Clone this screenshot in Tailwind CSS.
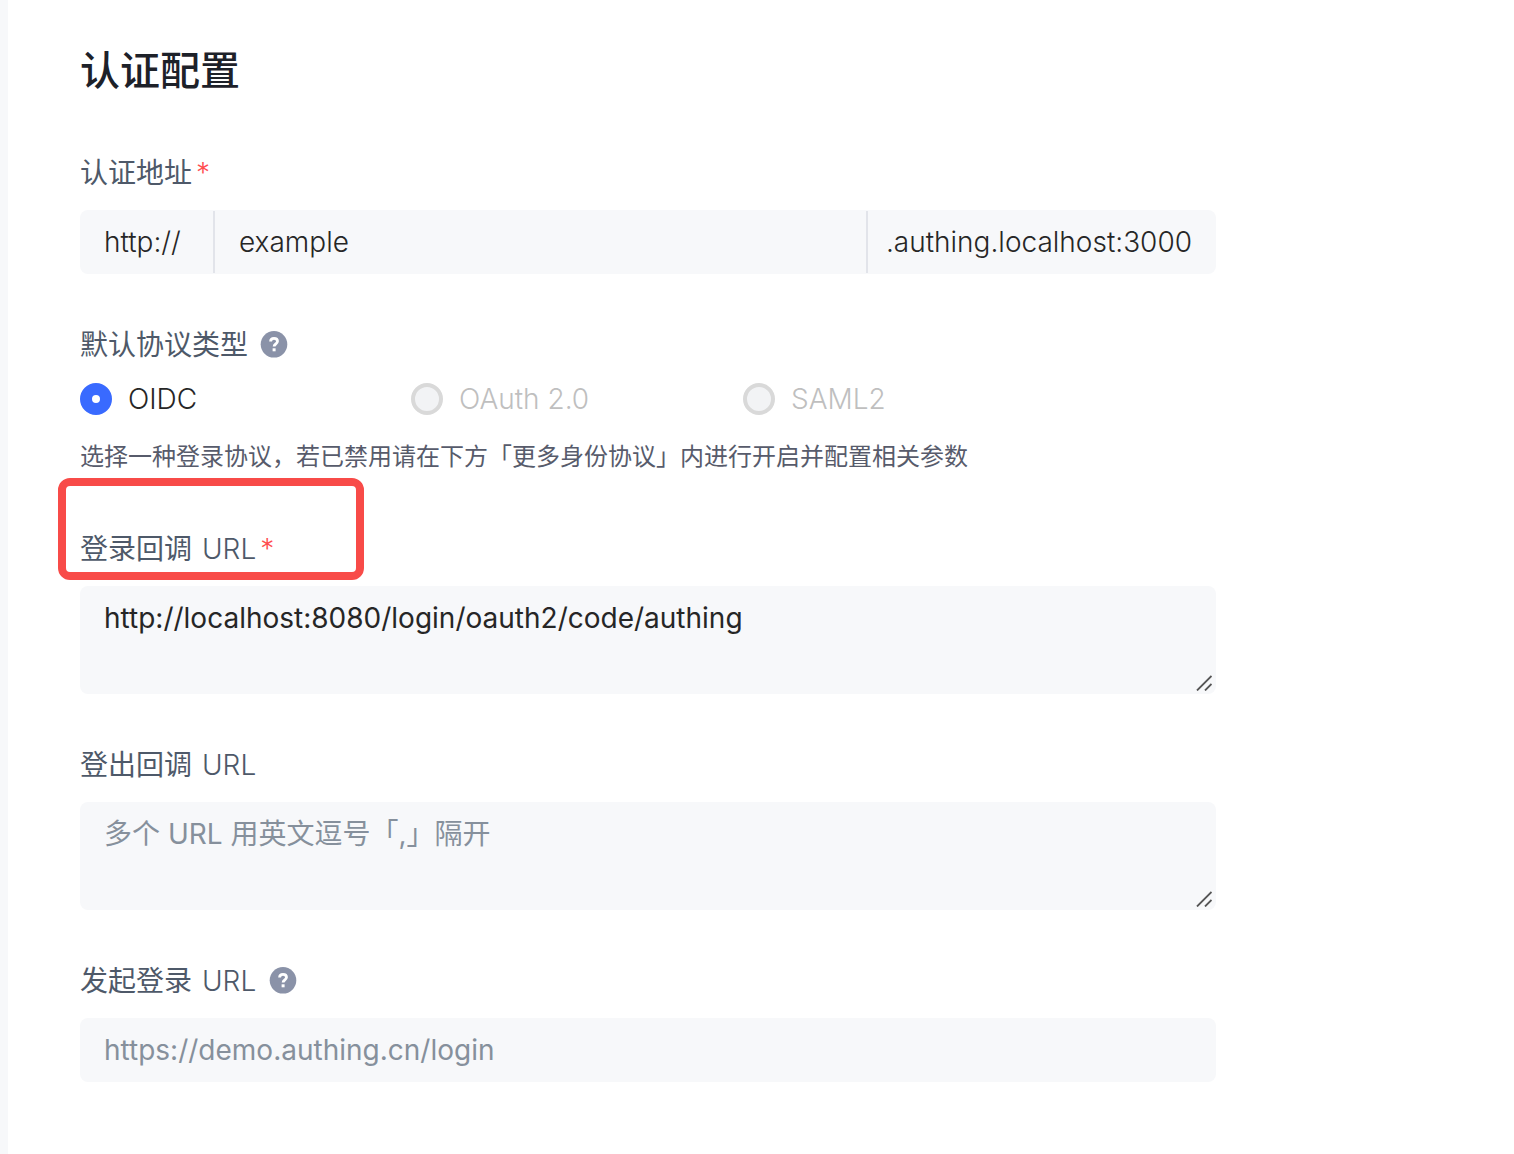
<!DOCTYPE html>
<html lang="zh-CN">
<head>
<meta charset="utf-8">
<meta name="viewport" content="width=device-width, initial-scale=1">
<title>认证配置</title>
<script src="https://cdn.jsdelivr.net/npm/@tailwindcss/browser@4"></script>
</head>
<body class="min-h-screen bg-[#f7f8fa] pl-2">
<main class="min-h-screen bg-white px-[72px] py-10">
<form class="max-w-[1136px] font-[Inter,'Noto_Sans_CJK_SC',sans-serif] text-[28px] text-[#4e5969]">
  <h1 class="text-[40px] leading-[62px] font-medium text-[#1d2129]">认证配置</h1>

  <div class="mt-12">
    <label for="domain" class="mb-3.5 flex h-[46px] items-center">认证地址<span class="ml-1 font-light text-[#ff4d4f]">*</span></label>
    <div class="flex h-16 items-stretch rounded-lg bg-[#f7f8fa] font-light text-[#262626]">
      <span class="my-px flex w-[135px] items-center border-r-2 border-[#e2e4ea] pl-6">http://</span>
      <input id="domain" type="text" value="example" class="min-w-0 flex-1 px-6 outline-none">
      <span class="my-px flex w-[350px] items-center justify-end border-l-2 border-[#e2e4ea] pr-6">.authing.localhost:3000</span>
    </div>
  </div>

  <fieldset class="mt-12">
    <legend class="mb-3.5 flex h-[46px] items-center">默认协议类型
      <svg class="ml-3 size-7" viewBox="0 0 28 28" role="img" aria-label="帮助"><circle cx="14" cy="13.3" r="13.3" fill="#8a92a8"/><path d="M10.600 10.500C10.600 8.500 12 7.300 14 7.300s3.500 1.200 3.500 3c0 2.500-3.400 2.700-3.400 5.300" fill="none" stroke="#fff" stroke-width="2.800"/><rect x="12.600" y="17.300" width="3" height="3" fill="#fff"/></svg>
    </legend>
    <div class="grid h-[34px] grid-cols-[331px_332px_auto] items-center leading-8 font-light">
      <label class="flex items-center gap-4 text-[#262626]"><input type="radio" name="protocol" checked class="size-8 appearance-none rounded-full border-12 border-[#396aff] bg-white">OIDC</label>
      <label class="flex items-center gap-4 text-[#bfbfbf]"><input type="radio" name="protocol" disabled class="size-8 appearance-none rounded-full border-4 border-[#d9d9d9] bg-[#f2f3f5]">OAuth 2.0</label>
      <label class="flex items-center gap-4 text-[#bfbfbf]"><input type="radio" name="protocol" disabled class="size-8 appearance-none rounded-full border-4 border-[#d9d9d9] bg-[#f2f3f5]">SAML2</label>
    </div>
    <p class="mt-5 text-2xl leading-[42px] text-[#575b6b]">选择一种登录协议，若已禁用请在下方「更多身份协议」内进行开启并配置相关参数</p>
  </fieldset>

  <div class="relative mt-12">
    <div class="pointer-events-none absolute -top-12 -left-[22px] h-[102px] w-[306px] rounded-xl border-8 border-[#f84b48]"></div>
    <label for="login-callback" class="mb-3.5 flex h-[46px] items-center gap-2.5">登录回调 <span class="font-light">URL<span class="ml-1 text-[#ff4d4f]">*</span></span></label>
    <div class="relative">
      <textarea id="login-callback" class="block h-[108px] w-full resize-none rounded-lg bg-[#f7f8fa] px-6 py-2.5 leading-[44px] text-[#262626] outline-none">http://localhost:8080/login/oauth2/code/authing</textarea>
      <svg class="absolute right-1 bottom-[3px] size-4" viewBox="0 0 16 16" fill="none" stroke="#555" stroke-width="1.800"><path d="M1 15.500 15.500 1M9 15.500 15.500 9"/></svg>
    </div>
  </div>

  <div class="mt-12">
    <label for="logout-callback" class="mb-3.5 flex h-[46px] items-center gap-2.5">登出回调 <span class="font-light">URL</span></label>
    <div class="relative">
      <textarea id="logout-callback" placeholder="多个 URL 用英文逗号「,」隔开" class="block h-[108px] w-full resize-none rounded-lg bg-[#f7f8fa] px-6 py-2.5 leading-[44px] outline-none placeholder:text-[#86909c]"></textarea>
      <svg class="absolute right-1 bottom-[3px] size-4" viewBox="0 0 16 16" fill="none" stroke="#555" stroke-width="1.800"><path d="M1 15.500 15.500 1M9 15.500 15.500 9"/></svg>
    </div>
  </div>

  <div class="mt-12">
    <label for="login-url" class="mb-3.5 flex h-[46px] items-center gap-2.5">发起登录 <span class="font-light">URL</span>
      <svg class="ml-[3px] size-7" viewBox="0 0 28 28" role="img" aria-label="帮助"><circle cx="14" cy="13.3" r="13.3" fill="#8a92a8"/><path d="M10.600 10.500C10.600 8.500 12 7.300 14 7.300s3.500 1.200 3.500 3c0 2.500-3.400 2.700-3.400 5.300" fill="none" stroke="#fff" stroke-width="2.800"/><rect x="12.600" y="17.300" width="3" height="3" fill="#fff"/></svg>
    </label>
    <input id="login-url" type="text" placeholder="https://demo.authing.cn/login" class="block h-16 w-full rounded-lg bg-[#f7f8fa] px-6 outline-none placeholder:text-[#86909c]">
  </div>
</form>
</main>
</body>
</html>
